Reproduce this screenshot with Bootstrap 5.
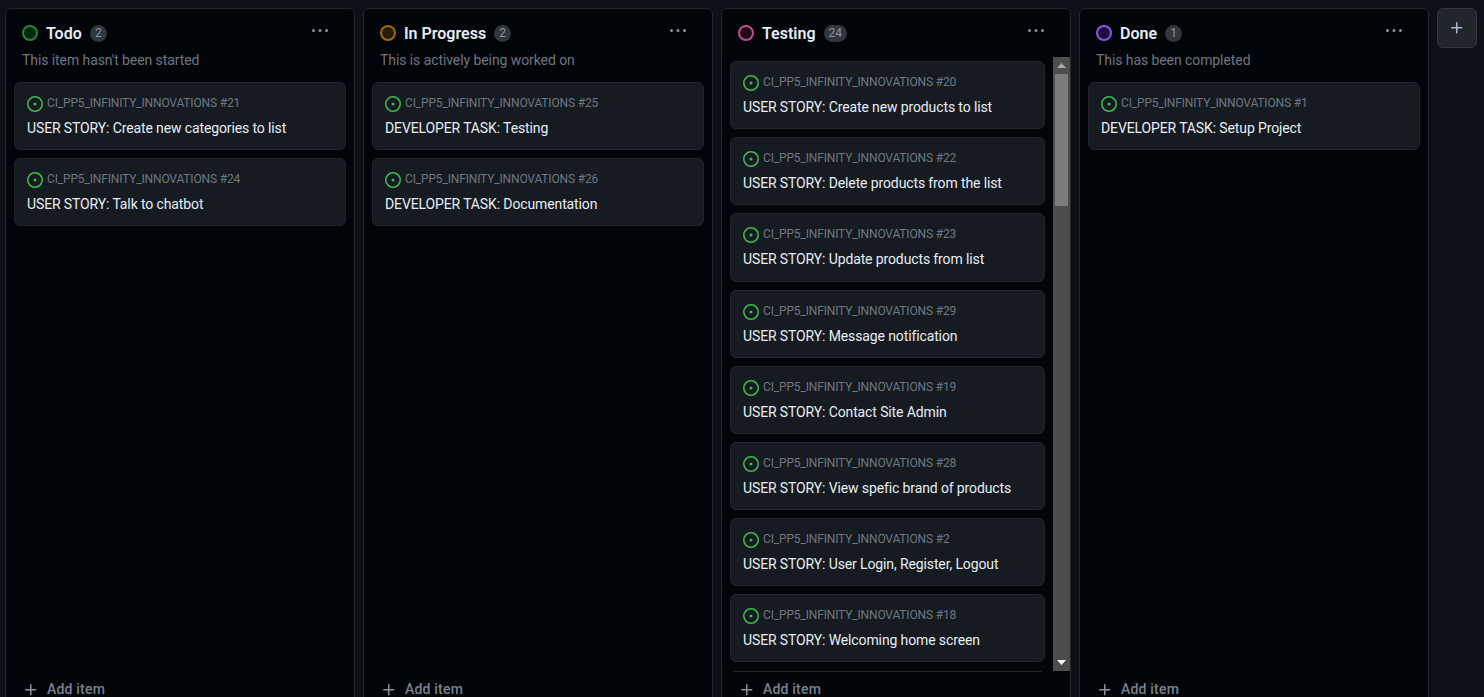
<!DOCTYPE html>
<html lang="en">
<head>
    <meta charset="UTF-8">
    <meta name="viewport" content="width=device-width, initial-scale=1.0">
    <title>Project board</title>
    <link href="https://cdn.jsdelivr.net/npm/bootstrap@5.3.2/dist/css/bootstrap.min.css" rel="stylesheet">
    <style>
        html, body {
            height: 697px;
            overflow: hidden;
        }
        body {
            background-color: #0d1117;
            font-family: Roboto, "Noto Sans", "Liberation Sans", sans-serif;
            font-size: 14px;
            color: #e6edf3;
        }
        .board {
            padding: 8px 0 0 5px;
        }
        .board-col {
            flex: 0 0 350px;
            height: 700px;
            background-color: #010409;
            border: 1px solid #21262d;
            border-radius: 6px;
            overflow: hidden;
        }
        .col-head {
            height: 48px;
            padding: 0 16px;
        }
        .status-dot {
            width: 16px;
            height: 16px;
            border-radius: 50%;
            border: 2px solid;
            flex: none;
        }
        .dot-green { border-color: #238636; background-color: #04260f; }
        .dot-yellow { border-color: #9e6a03; background-color: #271c03; }
        .dot-pink { border-color: #bf4b8a; background-color: #22091a; }
        .dot-purple { border-color: #8957e5; background-color: #1d0f3a; }
        .col-name {
            font-size: 16px;
            font-weight: 600;
            line-height: 24px;
            padding-top: 2px;
            color: #e6edf3;
        }
        .col-count {
            background-color: #30363d;
            color: #8b949e;
            font-size: 12px;
            font-weight: 400;
            line-height: 17px;
            min-width: 17px;
            padding: 0 5px;
        }
        .col-menu {
            color: #8b949e;
            margin: -5px 10px 0 0;
        }
        .col-desc {
            height: 32px;
            margin-top: -7px;
            padding: 0 16px;
            color: #6e7681;
            line-height: 20px;
            letter-spacing: -0.08px;
        }
        .col-list {
            min-height: 0;
            padding: 0 8px;
        }
        .story {
            height: 68.14px;
            background-color: #161b22;
            border: 1px solid #21262d;
            border-radius: 6px;
            color: #e6edf3;
            padding: 12px 12px 0;
        }
        .story-repo {
            color: #6e7681;
            font-size: 12px;
            line-height: 16px;
            letter-spacing: -0.16px;
        }
        .story-icon {
            fill: #3fb950;
            flex: none;
            transform: translateY(1px);
        }
        .story-title {
            line-height: 20px;
            margin-top: 7px;
            letter-spacing: -0.12px;
        }
        .test-wrap {
            min-height: 0;
        }
        .test-list {
            padding: 4.15px 8px 0;
            overflow: hidden;
        }
        .fake-scroll {
            width: 17px;
            background-color: #4d4d4d;
            flex: none;
        }
        .fake-scroll .arrow-box {
            height: 17px;
        }
        .fake-thumb {
            height: 132px;
            background-color: #7b7b7b;
            margin: 0 2px;
        }
        .col-foot {
            height: 35px;
            padding: 0 17px;
            color: #768390;
            font-size: 14px;
            font-weight: 500;
            letter-spacing: 0.2px;
        }
        .col-foot svg {
            fill: #8b949e;
        }
        .foot-line {
            border-top: 1px solid #21262d;
            margin: 0 8px 0 11px;
            width: 309px;
        }
        .col-rule {
            border-top: 1px solid transparent;
        }
        .add-col {
            width: 40px;
            height: 40px;
            padding: 0;
            background-color: #21262d;
            border: 1px solid #30363d;
            border-radius: 6px;
            flex: none;
        }
        .add-col svg {
            fill: #adbac7;
        }
    </style>
</head>
<body>
    <!-- iconos -->
    <svg class="d-none">
        <symbol id="ico-issue" viewBox="0 0 16 16"><path d="M8 9.5a1.5 1.5 0 1 0 0-3 1.5 1.5 0 0 0 0 3Z"/><path d="M8 0a8 8 0 1 1 0 16A8 8 0 0 1 8 0ZM1.5 8a6.5 6.5 0 1 0 13 0 6.5 6.5 0 0 0-13 0Z"/></symbol>
        <symbol id="ico-kebab" viewBox="0 0 16 16"><path d="M8 9a1.5 1.5 0 1 0 0-3 1.5 1.5 0 0 0 0 3ZM1.5 9a1.5 1.5 0 1 0 0-3 1.5 1.5 0 0 0 0 3Zm13 0a1.5 1.5 0 1 0 0-3 1.5 1.5 0 0 0 0 3Z"/></symbol>
        <symbol id="ico-plus" viewBox="0 0 16 16"><path d="M7.75 2a.75.75 0 0 1 .75.75V7h4.25a.75.75 0 0 1 0 1.5H8.5v4.25a.75.75 0 0 1-1.5 0V8.5H2.75a.75.75 0 0 1 0-1.5H7V2.75A.75.75 0 0 1 7.75 2Z"/></symbol>
    </svg>

    <div class="board d-flex gap-2 align-items-start">

        <!-- Todo -->
        <section class="board-col d-flex flex-column">
            <div class="col-head d-flex align-items-center">
                <span class="status-dot dot-green me-2"></span>
                <span class="col-name me-2">Todo</span>
                <span class="badge rounded-pill col-count">2</span>
                <svg class="col-menu ms-auto" width="16" height="16" fill="currentColor"><use href="#ico-kebab"/></svg>
            </div>
            <div class="col-desc">This item hasn't been started</div>
            <div class="col-list flex-grow-1 d-flex flex-column gap-2">
                <div class="card story">
                    <div class="story-repo d-flex align-items-center gap-1"><svg class="story-icon" width="16" height="16"><use href="#ico-issue"/></svg>CI_PP5_INFINITY_INNOVATIONS #21</div>
                    <div class="story-title">USER STORY: Create new categories to list</div>
                </div>
                <div class="card story">
                    <div class="story-repo d-flex align-items-center gap-1"><svg class="story-icon" width="16" height="16"><use href="#ico-issue"/></svg>CI_PP5_INFINITY_INNOVATIONS #24</div>
                    <div class="story-title">USER STORY: Talk to chatbot</div>
                </div>
            </div>
            <div class="col-rule"></div>
            <div class="col-foot d-flex align-items-center gap-2"><svg width="16" height="16"><use href="#ico-plus"/></svg>Add item</div>
        </section>

        <!-- In Progress -->
        <section class="board-col d-flex flex-column">
            <div class="col-head d-flex align-items-center">
                <span class="status-dot dot-yellow me-2"></span>
                <span class="col-name me-2">In Progress</span>
                <span class="badge rounded-pill col-count">2</span>
                <svg class="col-menu ms-auto" width="16" height="16" fill="currentColor"><use href="#ico-kebab"/></svg>
            </div>
            <div class="col-desc">This is actively being worked on</div>
            <div class="col-list flex-grow-1 d-flex flex-column gap-2">
                <div class="card story">
                    <div class="story-repo d-flex align-items-center gap-1"><svg class="story-icon" width="16" height="16"><use href="#ico-issue"/></svg>CI_PP5_INFINITY_INNOVATIONS #25</div>
                    <div class="story-title">DEVELOPER TASK: Testing</div>
                </div>
                <div class="card story">
                    <div class="story-repo d-flex align-items-center gap-1"><svg class="story-icon" width="16" height="16"><use href="#ico-issue"/></svg>CI_PP5_INFINITY_INNOVATIONS #26</div>
                    <div class="story-title">DEVELOPER TASK: Documentation</div>
                </div>
            </div>
            <div class="col-rule"></div>
            <div class="col-foot d-flex align-items-center gap-2"><svg width="16" height="16"><use href="#ico-plus"/></svg>Add item</div>
        </section>

        <!-- Testing -->
        <section class="board-col d-flex flex-column">
            <div class="col-head d-flex align-items-center">
                <span class="status-dot dot-pink me-2"></span>
                <span class="col-name me-2">Testing</span>
                <span class="badge rounded-pill col-count">24</span>
                <svg class="col-menu ms-auto" width="16" height="16" fill="currentColor"><use href="#ico-kebab"/></svg>
            </div>
            <div class="test-wrap flex-grow-1 d-flex">
                <div class="test-list flex-grow-1 d-flex flex-column gap-2">
                    <div class="card story flex-shrink-0">
                        <div class="story-repo d-flex align-items-center gap-1"><svg class="story-icon" width="16" height="16"><use href="#ico-issue"/></svg>CI_PP5_INFINITY_INNOVATIONS #20</div>
                        <div class="story-title">USER STORY: Create new products to list</div>
                    </div>
                    <div class="card story flex-shrink-0">
                        <div class="story-repo d-flex align-items-center gap-1"><svg class="story-icon" width="16" height="16"><use href="#ico-issue"/></svg>CI_PP5_INFINITY_INNOVATIONS #22</div>
                        <div class="story-title">USER STORY: Delete products from the list</div>
                    </div>
                    <div class="card story flex-shrink-0">
                        <div class="story-repo d-flex align-items-center gap-1"><svg class="story-icon" width="16" height="16"><use href="#ico-issue"/></svg>CI_PP5_INFINITY_INNOVATIONS #23</div>
                        <div class="story-title">USER STORY: Update products from list</div>
                    </div>
                    <div class="card story flex-shrink-0">
                        <div class="story-repo d-flex align-items-center gap-1"><svg class="story-icon" width="16" height="16"><use href="#ico-issue"/></svg>CI_PP5_INFINITY_INNOVATIONS #29</div>
                        <div class="story-title">USER STORY: Message notification</div>
                    </div>
                    <div class="card story flex-shrink-0">
                        <div class="story-repo d-flex align-items-center gap-1"><svg class="story-icon" width="16" height="16"><use href="#ico-issue"/></svg>CI_PP5_INFINITY_INNOVATIONS #19</div>
                        <div class="story-title">USER STORY: Contact Site Admin</div>
                    </div>
                    <div class="card story flex-shrink-0">
                        <div class="story-repo d-flex align-items-center gap-1"><svg class="story-icon" width="16" height="16"><use href="#ico-issue"/></svg>CI_PP5_INFINITY_INNOVATIONS #28</div>
                        <div class="story-title">USER STORY: View spefic brand of products</div>
                    </div>
                    <div class="card story flex-shrink-0">
                        <div class="story-repo d-flex align-items-center gap-1"><svg class="story-icon" width="16" height="16"><use href="#ico-issue"/></svg>CI_PP5_INFINITY_INNOVATIONS #2</div>
                        <div class="story-title">USER STORY: User Login, Register, Logout</div>
                    </div>
                    <div class="card story flex-shrink-0">
                        <div class="story-repo d-flex align-items-center gap-1"><svg class="story-icon" width="16" height="16"><use href="#ico-issue"/></svg>CI_PP5_INFINITY_INNOVATIONS #18</div>
                        <div class="story-title">USER STORY: Welcoming home screen</div>
                    </div>
                </div>
                <!-- barra de scroll dibujada -->
                <div class="fake-scroll d-flex flex-column">
                    <div class="arrow-box d-flex align-items-center justify-content-center"><svg width="9" height="5" fill="#a8a8a8"><path d="M4.5 0 9 5H0Z"/></svg></div>
                    <div class="fake-thumb"></div>
                    <div class="arrow-box d-flex align-items-center justify-content-center mt-auto"><svg width="9" height="5" fill="#fff"><path d="M0 0h9L4.5 5Z"/></svg></div>
                </div>
            </div>
            <div class="foot-line"></div>
            <div class="col-foot d-flex align-items-center gap-2"><svg width="16" height="16"><use href="#ico-plus"/></svg>Add item</div>
        </section>

        <!-- Done -->
        <section class="board-col d-flex flex-column">
            <div class="col-head d-flex align-items-center">
                <span class="status-dot dot-purple me-2"></span>
                <span class="col-name me-2">Done</span>
                <span class="badge rounded-pill col-count">1</span>
                <svg class="col-menu ms-auto" width="16" height="16" fill="currentColor"><use href="#ico-kebab"/></svg>
            </div>
            <div class="col-desc">This has been completed</div>
            <div class="col-list flex-grow-1 d-flex flex-column gap-2">
                <div class="card story">
                    <div class="story-repo d-flex align-items-center gap-1"><svg class="story-icon" width="16" height="16"><use href="#ico-issue"/></svg>CI_PP5_INFINITY_INNOVATIONS #1</div>
                    <div class="story-title">DEVELOPER TASK: Setup Project</div>
                </div>
            </div>
            <div class="col-rule"></div>
            <div class="col-foot d-flex align-items-center gap-2"><svg width="16" height="16"><use href="#ico-plus"/></svg>Add item</div>
        </section>

        <button type="button" class="btn add-col d-flex align-items-center justify-content-center" aria-label="New column"><svg width="16" height="16"><use href="#ico-plus"/></svg></button>
    </div>

    <script src="https://cdn.jsdelivr.net/npm/bootstrap@5.3.2/dist/js/bootstrap.bundle.min.js"></script>
</body>
</html>
